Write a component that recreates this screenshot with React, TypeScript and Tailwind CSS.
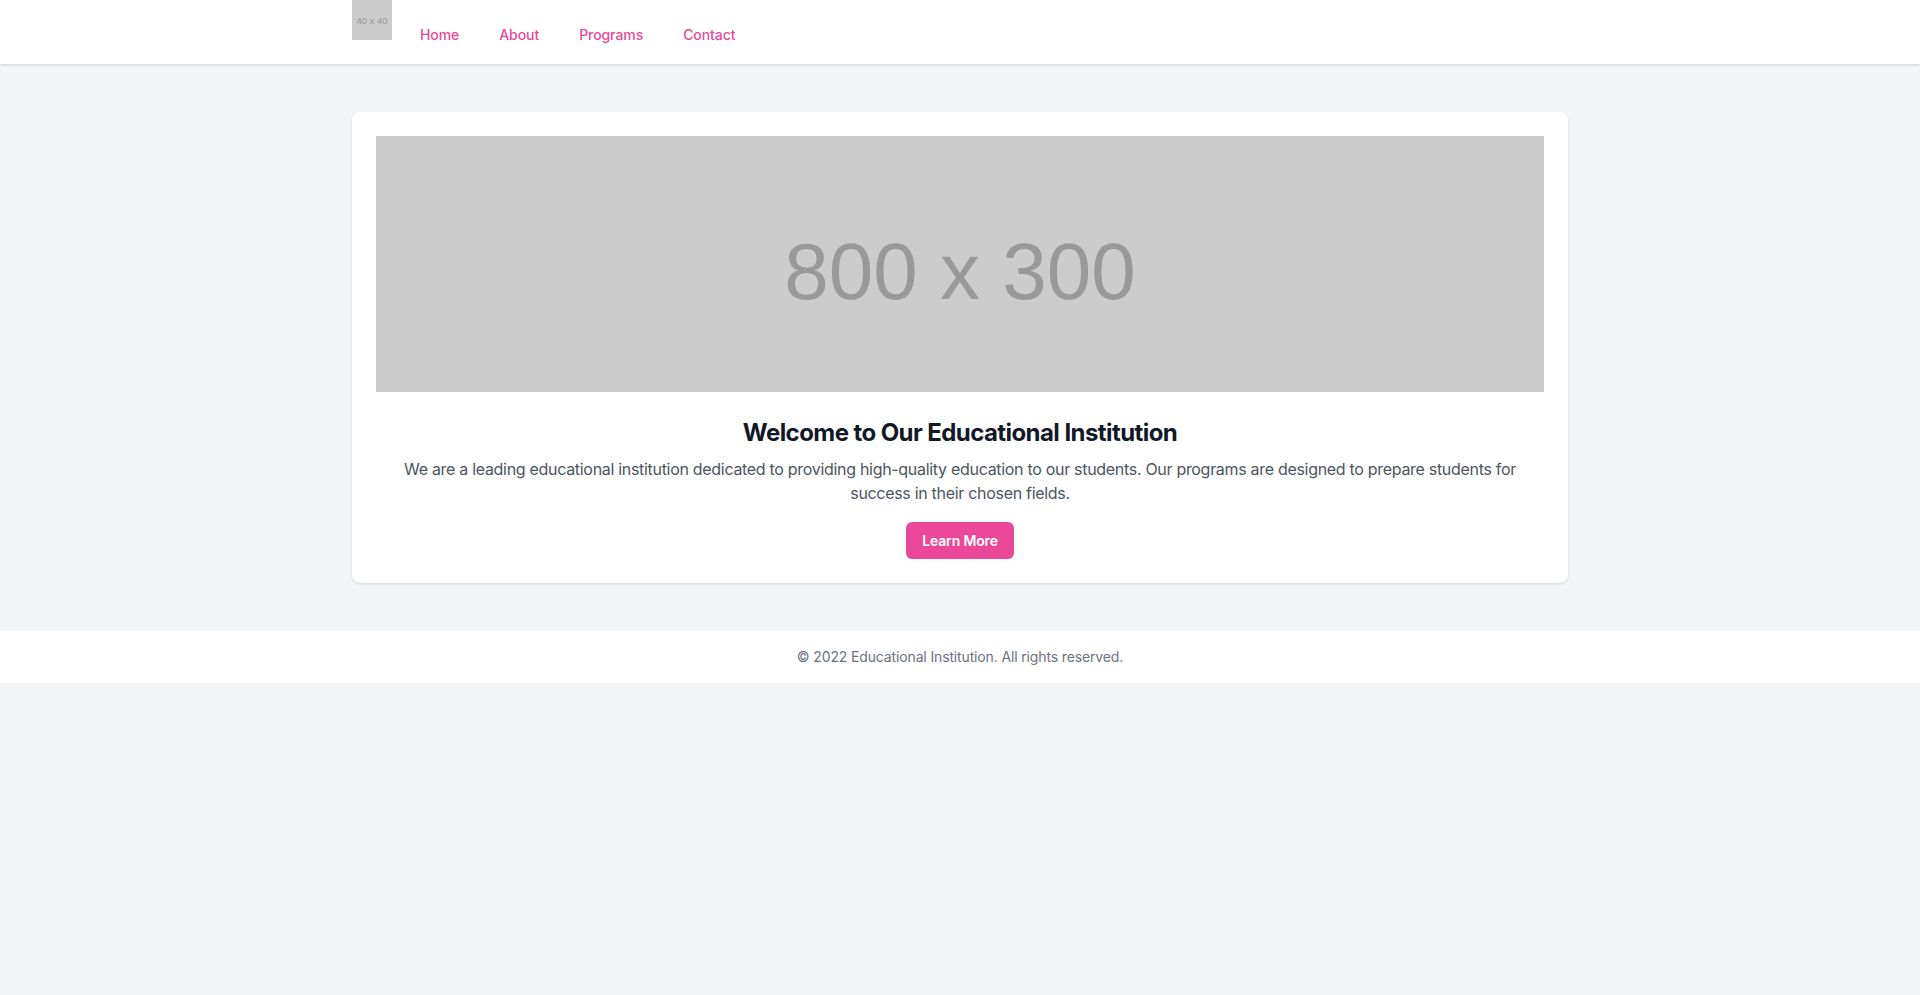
import React from "react";

export default function App() {
  return (
    <div className="min-h-screen bg-[#f3f4f6]" style={{ fontFamily: "Inter, 'Noto Sans', sans-serif" }}>
      <nav className="bg-white shadow">
        <div className="max-w-7xl mx-auto px-8">
          <div className="flex h-16">
            <div className="flex-shrink-0">
              <div
                className="w-10 h-10 bg-[#cccccc] text-[#969696] text-[9.5px] flex items-center justify-center pt-[2px]"
                style={{ fontFamily: "'Liberation Sans', Arial, sans-serif" }}
              >
                40 x 40
              </div>
            </div>
            <div className="flex ml-4 gap-4">
              {["Home", "About", "Programs", "Contact"].map((l) => (
                <a
                  key={l}
                  href="#"
                  className="inline-flex items-center px-3 pt-[6px] text-sm font-medium text-[#ec4899] tracking-[-0.005em]"
                >
                  {l}
                </a>
              ))}
            </div>
          </div>
        </div>
      </nav>

      <main className="max-w-7xl mx-auto px-8 py-12">
        <div className="bg-white rounded-lg shadow p-6">
          <div
            className="w-full h-64 bg-[#cccccc] flex items-center justify-center pt-4 text-[#999999] text-[80px] leading-none"
            style={{ fontFamily: "'Liberation Sans', Arial, sans-serif" }}
          >
            800 x 300
          </div>
          <h1 className="mt-6 text-2xl leading-[33px] font-bold text-[#111827] text-center tracking-[-0.024em]">
            Welcome to Our Educational Institution
          </h1>
          <p className="mt-2 text-base text-[#4b5563] text-center tracking-[-0.019em]">
            We are a leading educational institution dedicated to providing high-quality education to our students. Our programs are designed to prepare students for success in their chosen fields.
          </p>
          <div className="mt-[17px] flex justify-center">
            <button className="px-4 py-[8.5px] bg-[#ec4899] text-white text-sm font-semibold rounded-md tracking-[-0.01em]">
              Learn More
            </button>
          </div>
        </div>
      </main>

      <footer className="bg-white py-4">
        <p className="text-center text-sm text-[#6b7280] tracking-[-0.01em]">© 2022 Educational Institution. All rights reserved.</p>
      </footer>
    </div>
  );
}
